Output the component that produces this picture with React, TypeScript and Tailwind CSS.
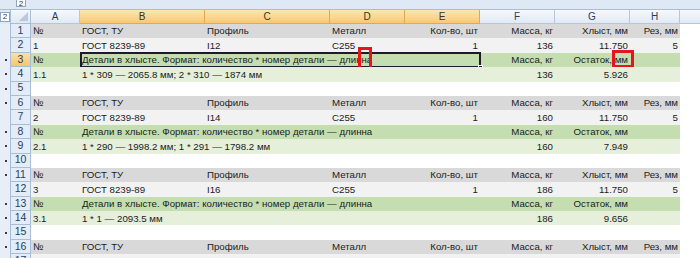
type Kind = 'head' | 'data' | 'sub' | 'subdata' | 'blank'

const colWidths = ['w-[49px]', 'w-[125px]', 'w-[125px]', 'w-[75px]', 'w-[75px]', 'w-[75px]', 'w-[75px]', 'w-[50px]']
const colNames = ['A', 'B', 'C', 'D', 'E', 'F', 'G', 'H']
const rightAligned = [false, false, false, false, true, true, true, true]

const headCells = ['№', 'ГОСТ, ТУ', 'Профиль', 'Металл', 'Кол-во, шт', 'Масса, кг', 'Хлыст, мм', 'Рез, мм']
const subHead = ['№', 'Детали в хлысте. Формат: количество * номер детали — длинна', '', '', '', 'Масса, кг', 'Остаток, мм', '']

const rows: { n: number; kind: Kind; cells: string[] }[] = [
  { n: 1, kind: 'head', cells: headCells },
  { n: 2, kind: 'data', cells: ['1', 'ГОСТ 8239-89', 'I12', 'C255', '1', '136', '11.750', '5'] },
  { n: 3, kind: 'sub', cells: subHead },
  { n: 4, kind: 'subdata', cells: ['1.1', '1 * 309 — 2065.8 мм; 2 * 310 — 1874 мм', '', '', '', '136', '5.926', ''] },
  { n: 5, kind: 'blank', cells: [] },
  { n: 6, kind: 'head', cells: headCells },
  { n: 7, kind: 'data', cells: ['2', 'ГОСТ 8239-89', 'I14', 'C255', '1', '160', '11.750', '5'] },
  { n: 8, kind: 'sub', cells: subHead },
  { n: 9, kind: 'subdata', cells: ['2.1', '1 * 290 — 1998.2 мм; 1 * 291 — 1798.2 мм', '', '', '', '160', '7.949', ''] },
  { n: 10, kind: 'blank', cells: [] },
  { n: 11, kind: 'head', cells: headCells },
  { n: 12, kind: 'data', cells: ['3', 'ГОСТ 8239-89', 'I16', 'C255', '1', '186', '11.750', '5'] },
  { n: 13, kind: 'sub', cells: subHead },
  { n: 14, kind: 'subdata', cells: ['3.1', '1 * 1 — 2093.5 мм', '', '', '', '186', '9.656', ''] },
  { n: 15, kind: 'blank', cells: [] },
  { n: 16, kind: 'head', cells: headCells },
  { n: 17, kind: 'data', cells: ['4', 'ГОСТ 8239-89', 'I24', 'C255', '1', '221', '11.750', '5'] },
]

const fills: Record<Kind, string> = {
  head: 'bg-[#d9d9d9]',
  data: 'bg-[#f2f2f2]',
  sub: 'bg-[#c5deb1]',
  subdata: 'bg-[#e5efda]',
  blank: 'bg-white',
}

function RowHeader({ n }: { n: number }) {
  const selected = n === 3
  return (
    <div
      className={`w-[20px] shrink-0 h-full flex items-center justify-center border-r border-b border-[#a9bdd6] text-[10.5px] text-[#27415f] ${
        selected ? 'bg-gradient-to-b from-[#fbe0a6] to-[#f6c66d]' : 'bg-[#e4ecf7]'
      }`}
    >
      {n}
    </div>
  )
}

function SheetRow({ n, kind, cells }: { n: number; kind: Kind; cells: string[] }) {
  const grouped = ![1, 2, 7, 12, 17].includes(n)
  return (
    <div className="flex h-[14.4px] relative">
      {/* outline gutter */}
      <div className="w-[11px] shrink-0 h-full bg-[#e8eef7] border-r border-[#a9bdd6] flex items-center justify-end pr-[3px]">
        {grouped && <div className="w-[2px] h-[2px] bg-[#3b3b3b]" />}
      </div>
      <RowHeader n={n} />
      <div className={`flex h-full ${fills[kind]}`}>
        {colWidths.map((w, i) => (
          <div
            key={i}
            className={`${w} shrink-0 h-full flex items-center whitespace-nowrap px-[2px] pt-[1px] text-[9.7px] text-[#1c1c1c] ${
              rightAligned[i] ? 'justify-end' : 'justify-start'
            }`}
          >
            {cells[i] ?? ''}
          </div>
        ))}
      </div>
      <div className="flex-1 h-full bg-white" />
      {n === 3 && (
        <>
          {/* selection B3:E3 */}
          <div className="absolute left-[80px] top-[-1px] w-[401px] h-[16px] border-2 border-[#1e1a2a] pointer-events-none" />
          <div className="absolute left-[478px] top-[12px] w-[5px] h-[5px] bg-[#1e1a2a] border border-white" />
          {/* red highlight marks */}
          <div className="absolute left-[358px] top-[-6px] w-[14px] h-[23px] border-[3px] border-[#e8141c]" />
          <div className="absolute left-[612px] top-[-3px] w-[22px] h-[18px] border-[3px] border-[#e8141c]" />
        </>
      )}
    </div>
  )
}

export default function App() {
  return (
    <div className="w-[700px] h-[258px] overflow-hidden bg-white font-['Liberation_Sans',Arial,sans-serif]">
      {/* outline level strip */}
      <div className="flex h-[10px] bg-[#dfe8f5] border-b border-[#a9bdd6]">
        <div className="w-[16px] shrink-0" />
        <div className="w-[10px] h-[8px] -mt-[1px] bg-white border border-[#8ea6c4] text-[8px] leading-[7px] text-center text-[#333]">
          2
        </div>
      </div>
      {/* column headers */}
      <div className="flex h-[14px]">
        <div className="w-[11px] shrink-0 h-full bg-[#dfe8f5] border-r border-[#a9bdd6] flex items-center">
          <div className="w-[10px] h-[10px] bg-white border border-[#8ea6c4] text-[8px] leading-[8px] text-center text-[#333]">
            2
          </div>
        </div>
        <div className="w-[20px] shrink-0 h-full bg-gradient-to-b from-[#f5f8fc] to-[#dfe7f2] border-r border-b border-[#a9bdd6] relative">
          <div className="absolute right-[2px] bottom-[2px] w-0 h-0 border-l-[9px] border-l-transparent border-b-[9px] border-b-[#b9c9dd]" />
        </div>
        {colWidths.map((w, i) => {
          const sel = i >= 1 && i <= 4
          return (
            <div
              key={i}
              className={`${w} shrink-0 h-full flex items-center justify-center border-r border-b text-[10px] ${
                sel
                  ? 'bg-gradient-to-b from-[#fce6b4] to-[#f8c872] border-[#e3a950] text-[#3b3320]'
                  : 'bg-gradient-to-b from-[#f7f9fc] to-[#e1e9f4] border-[#b4c6dc] text-[#27415f]'
              }`}
            >
              {colNames[i]}
            </div>
          )
        })}
        <div className="flex-1 h-full bg-gradient-to-b from-[#f7f9fc] to-[#e1e9f4] border-b border-[#b4c6dc]" />
      </div>
      {rows.map((r) => (
        <SheetRow key={r.n} n={r.n} kind={r.kind} cells={r.cells} />
      ))}
    </div>
  )
}
